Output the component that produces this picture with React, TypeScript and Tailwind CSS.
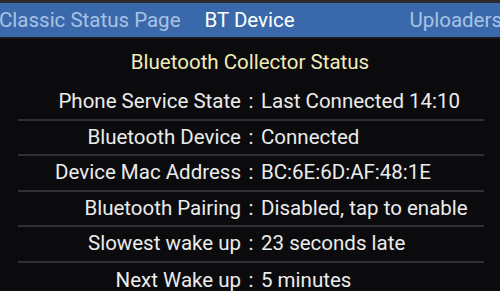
const rows = [
  { label: "Phone Service State", value: "Last Connected 14:10" },
  { label: "Bluetooth Device", value: "Connected" },
  { label: "Device Mac Address", value: "BC:6E:6D:AF:48:1E" },
  { label: "Bluetooth Pairing", value: "Disabled, tap to enable" },
  { label: "Slowest wake up", value: "23 seconds late" },
  { label: "Next Wake up", value: "5 minutes" },
]

export default function App() {
  return (
    <div className="w-[500px] h-[291px] overflow-hidden bg-[#0b0b0d] font-['Roboto',sans-serif]">
      <div className="h-[3px] bg-[#2b2b2e]" />
      <div className="h-[34px] bg-[#3a69ab] flex items-center text-[20.5px] whitespace-nowrap overflow-hidden">
        <span className="ml-[-1px] text-[#a9c2e3]">Classic Status Page</span>
        <span className="ml-[24px] text-white">BT Device</span>
        <span className="ml-auto mr-[-2px] text-[#a9c2e3]">Uploaders</span>
      </div>
      <div className="h-[2px] bg-[#1a1a1d]" />
      <div className="text-center text-[#f3ebba] text-[20.5px] h-[46px] leading-[46px]">
        Bluetooth Collector Status
      </div>
      <div className="mx-[18px] w-[466px]">
        {rows.map((r, i) => (
          <div
            key={r.label}
            className={
              i < rows.length - 1
                ? "flex items-center h-[35.5px] border-b-2 border-[#303033] text-[20.5px] text-[#ececec]"
                : "flex items-center h-[35.5px] text-[20.5px] text-[#ececec]"
            }
          >
            <div className="w-[223px] text-right">{r.label}</div>
            <div className="w-[20px] text-center">:</div>
            <div>{r.value}</div>
          </div>
        ))}
      </div>
    </div>
  )
}
